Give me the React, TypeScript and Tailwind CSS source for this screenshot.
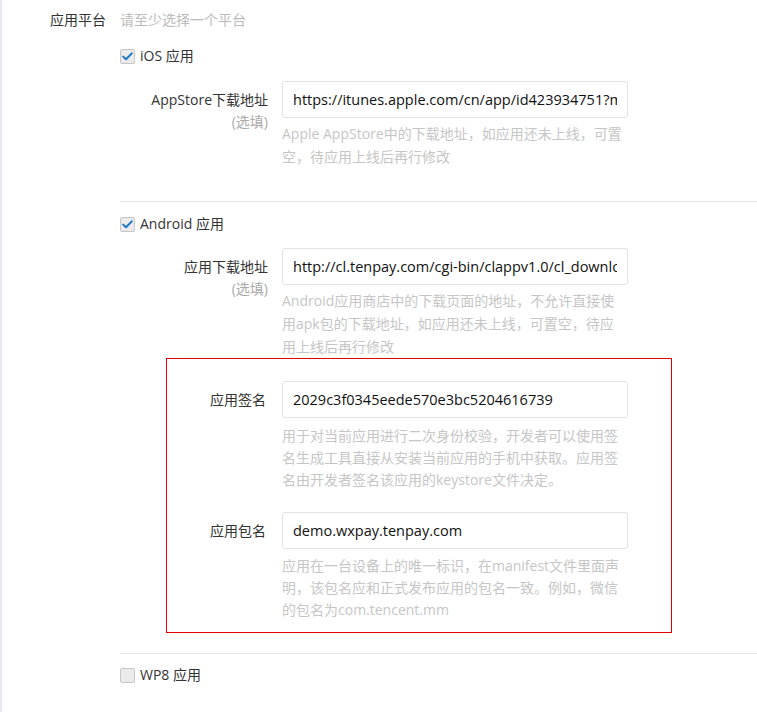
import React from "react";

function Check({ checked, label }: { checked: boolean; label: string }) {
  return (
    <label className="flex h-[20px] items-center leading-[20px] text-[#333]">
      <span className="flex h-[15px] w-[15px] items-center justify-center rounded-[2px] border border-[#c6c6c6] bg-[#ebebeb]">
        {checked && (
          <svg width="11" height="9" viewBox="0 0 11 9" fill="none">
            <path d="M1.2 4.6 L4 7.3 L9.8 1.4" stroke="#1b78c9" strokeWidth="2" strokeLinecap="round" strokeLinejoin="round" />
          </svg>
        )}
      </span>
      <span className="ml-[5px]">{label}</span>
    </label>
  );
}

function Field({
  label,
  optional,
  value,
  help,
  labelWidth,
  helpClass,
}: {
  label: string;
  optional?: boolean;
  value: string;
  help: string[];
  labelWidth: string;
  helpClass: string;
}) {
  return (
    <div className="flex">
      <div className={`${labelWidth} shrink-0 pt-[8px] text-right leading-[22px]`}>
        <div className="text-[#333]">{label}</div>
        {optional && <div className="text-[#aaa]">(选填)</div>}
      </div>
      <div className="ml-[14px] w-[346px]">
        <input
          defaultValue={value}
          className="block h-[37px] w-[346px] rounded-[3px] border border-[#e3e3e3] bg-white px-[10px] text-[14.5px] text-[#111] outline-none"
        />
        <div className={`${helpClass} whitespace-nowrap text-[#c6c6c6]`}>
          {help.map((line, i) => (
            <div key={i}>{line}</div>
          ))}
        </div>
      </div>
    </div>
  );
}

export default function App() {
  return (
    <div className="min-h-[712px] w-[757px] overflow-hidden border-l-2 border-[#e8e8f0] bg-white font-['Open_Sans','Noto_Sans_CJK_SC',sans-serif] text-[14px]">
      <div className="flex pt-[10px]">
        <div className="w-[104px] shrink-0 text-right leading-[20px] text-[#333]">应用平台</div>
        <div className="ml-[14px] flex-1">
          <div className="leading-[20px] text-[#bbb]">请至少选择一个平台</div>

          {/* iOS */}
          <div className="mt-[16px]">
            <Check checked label="iOS 应用" />
          </div>
          <div className="mt-[15px]">
            <Field
              label="AppStore下载地址"
              optional
              value="https://itunes.apple.com/cn/app/id423934751?mt=8"
              labelWidth="w-[148px]"
              helpClass="mt-[4px] leading-[23px]"
              help={["Apple AppStore中的下载地址，如应用还未上线，可置", "空，待应用上线后再行修改"]}
            />
          </div>

          <div className="mt-[33px] border-t border-[#e5e5e5]" />

          {/* Android */}
          <div className="mt-[12px]">
            <Check checked label="Android 应用" />
          </div>
          <div className="mt-[14px]">
            <Field
              label="应用下载地址"
              optional
              value="http://cl.tenpay.com/cgi-bin/clappv1.0/cl_download.cgi"
              labelWidth="w-[148px]"
              helpClass="mt-[4px] leading-[23px]"
              help={[
                "Android应用商店中的下载页面的地址，不允许直接使",
                "用apk包的下载地址，如应用还未上线，可置空，待应",
                "用上线后再行修改",
              ]}
            />
          </div>

          <div className="ml-[46px] w-[506px] border border-[#e60000] pb-[11px] pt-[22px]">
            <Field
              label="应用签名"
              value="2029c3f0345eede570e3bc5204616739"
              labelWidth="w-[101px] pr-[2px]"
              helpClass="mt-[7px] leading-[22px]"
              help={[
                "用于对当前应用进行二次身份校验，开发者可以使用签",
                "名生成工具直接从安装当前应用的手机中获取。应用签",
                "名由开发者签名该应用的keystore文件决定。",
              ]}
            />
            <div className="mt-[21px]">
              <Field
                label="应用包名"
                value="demo.wxpay.tenpay.com"
                labelWidth="w-[101px] pr-[2px]"
                helpClass="mt-[6px] leading-[22px]"
                help={[
                  "应用在一台设备上的唯一标识，在manifest文件里面声",
                  "明，该包名应和正式发布应用的包名一致。例如，微信",
                  "的包名为com.tencent.mm",
                ]}
              />
            </div>
          </div>

          <div className="mt-[20px] border-t border-[#e5e5e5]" />

          {/* WP8 */}
          <div className="mt-[11px]">
            <Check checked={false} label="WP8 应用" />
          </div>
        </div>
      </div>
    </div>
  );
}
